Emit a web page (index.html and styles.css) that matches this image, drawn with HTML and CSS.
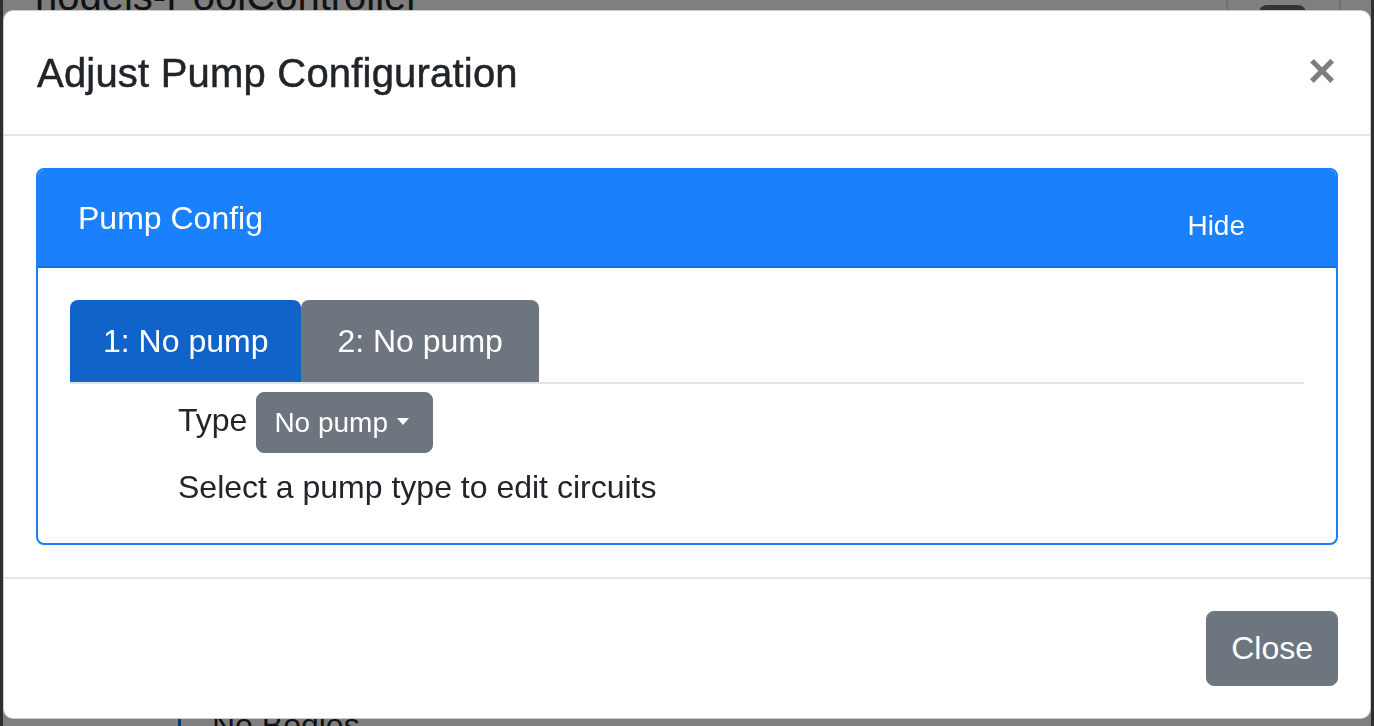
FILE: index.html
```html
<!DOCTYPE html>
<html lang="en">
<head>
<meta charset="utf-8">
<title>Adjust Pump Configuration</title>
<link rel="stylesheet" href="styles.css">
</head>
<body>
  <div class="page">
    <header class="topbar">
      <h1 class="brand">nodejs-PoolController</h1>
      <div class="nav-right">
        <span class="toggler"></span>
      </div>
    </header>
    <div class="bodies">No Bodies</div>
  </div>

  <div class="backdrop"></div>

  <div class="modal" role="dialog">
    <div class="modal-header">
      <h5 class="modal-title">Adjust Pump Configuration</h5>
      <button class="close" type="button" aria-label="Close">&times;</button>
    </div>
    <div class="modal-body">
      <div class="card">
        <div class="card-header">
          <span class="card-title">Pump Config</span>
          <button class="btn-hide" type="button">Hide</button>
        </div>
        <div class="card-body">
          <ul class="nav-tabs">
            <li class="tab tab-active">1: No pump</li>
            <li class="tab">2: No pump</li>
          </ul>
          <div class="tab-pane">
            <div class="type-row">
              <span class="type-label">Type</span>
              <button class="dropdown" type="button">No pump<span class="caret"></span></button>
            </div>
            <p class="hint">Select a pump type to edit circuits</p>
          </div>
        </div>
      </div>
    </div>
    <div class="modal-footer">
      <button class="btn-close" type="button">Close</button>
    </div>
  </div>
</body>
</html>
```

FILE: styles.css
```css
* {
  box-sizing: border-box;
}

html, body {
  margin: 0;
  padding: 0;
  height: 726px;
  overflow: hidden;
}

body {
  background: #5c5c5c;
  font-family: "Liberation Sans", Arial, Helvetica, sans-serif;
  color: #212529;
}

/* ---------- page behind the modal ---------- */
.page {
  margin: 0 3px;
  height: 726px;
  background: #ffffff;
  display: flex;
  flex-direction: column;
  justify-content: space-between;
  overflow: hidden;
}

.topbar {
  display: flex;
  justify-content: space-between;
  align-items: flex-start;
  height: 40px;
}

.brand {
  margin: -26px 0 0 32px;
  font-size: 40px;
  font-weight: 400;
  line-height: normal;
  color: #212529;
}

.nav-right {
  display: flex;
  align-items: flex-start;
  height: 40px;
  margin-right: 30px;
  padding: 0 33px 0 31px;
  border-left: 2px solid #dfe1e4;
  border-right: 2px solid #dfe1e4;
}

.toggler {
  display: block;
  width: 47px;
  height: 40px;
  margin-top: 5px;
  background: #666666;
  border-radius: 8px;
}

.bodies {
  margin: 0 0 -35px 175px;
  height: 60px;
  padding: 0 0 0 31px;
  border-left: 3px solid #0d6ede;
  font-size: 32px;
  line-height: 48px;
}

.backdrop {
  position: fixed;
  inset: 0;
  background: rgba(0, 0, 0, 0.5);
}

/* ---------- modal ---------- */
.modal {
  position: fixed;
  top: 10px;
  left: 3px;
  width: 1368px;
  background: #ffffff;
  border: 1px solid rgba(0, 0, 0, 0.2);
  border-radius: 10px;
  display: flex;
  flex-direction: column;
}

.modal-header {
  display: flex;
  align-items: flex-start;
  padding: 32px 32px 31px 33px;
  border-bottom: 2px solid #e3e5e8;
}

.modal-title {
  margin: 0;
  font-size: 40px;
  font-weight: 500;
  line-height: 60px;
  letter-spacing: 0.2px;
  -webkit-text-stroke: 0.5px #212529;
  color: #212529;
}

.close {
  margin: -28px -30px -32px auto;
  padding: 32px;
  background: transparent;
  border: 0;
  font-family: inherit;
  font-size: 48px;
  font-weight: 700;
  line-height: 1;
  color: #000000;
  opacity: 0.5;
  cursor: pointer;
}

.modal-body {
  padding: 32px;
}

.card {
  border: 2px solid #1a7ff8;
  border-radius: 8px;
  overflow: hidden;
}

.card-header {
  display: flex;
  justify-content: space-between;
  align-items: flex-start;
  padding: 24px 40px;
  background: #1a80fb;
  border-bottom: 2px solid #1570dc;
  color: #ffffff;
}

.card-title {
  font-size: 32px;
  line-height: 48px;
}

.btn-hide {
  margin: 16px 51px 0 0;
  padding: 0;
  background: transparent;
  border: 0;
  font-family: inherit;
  font-size: 28px;
  line-height: 32px;
  color: #ffffff;
}

.card-body {
  padding: 32px;
}

.nav-tabs {
  display: flex;
  margin: 0;
  padding: 0;
  list-style: none;
  border-bottom: 2px solid #e1e3e6;
}

.tab {
  padding: 17px 33px;
  font-size: 32px;
  line-height: 48px;
  color: #ffffff;
  background: #6d767e;
  border-radius: 8px 8px 0 0;
}

.tab-active {
  background: #1064c9;
}

.tab + .tab {
  padding: 17px 36px;
}

.tab-pane {
  padding-left: 108px;
}

.type-row {
  display: flex;
  align-items: flex-start;
  margin-top: 8px;
}

.type-label {
  margin: 4px 9px 0 0;
  font-size: 32px;
  line-height: 48px;
}

.dropdown {
  margin-top: 0;
  padding: 8px 23px 8px 17px;
  background: #6d767e;
  border: 1px solid #6d767e;
  border-radius: 8px;
  font-family: inherit;
  font-size: 28px;
  line-height: 43px;
  color: #ffffff;
}

.caret {
  display: inline-block;
  margin-left: 9px;
  vertical-align: 7px;
  border-top: 7px solid #ffffff;
  border-left: 6px solid transparent;
  border-right: 6px solid transparent;
}

.hint {
  margin: 10px 0 0 0;
  font-size: 32px;
  line-height: 48px;
}

.modal-footer {
  display: flex;
  justify-content: flex-end;
  padding: 32px;
  border-top: 2px solid #e3e5e8;
}

.btn-close {
  padding: 12px 24px 13px 24px;
  background: #6d767e;
  border: 1px solid #6d767e;
  border-radius: 8px;
  font-family: inherit;
  font-size: 32px;
  line-height: 48px;
  color: #ffffff;
}
```
